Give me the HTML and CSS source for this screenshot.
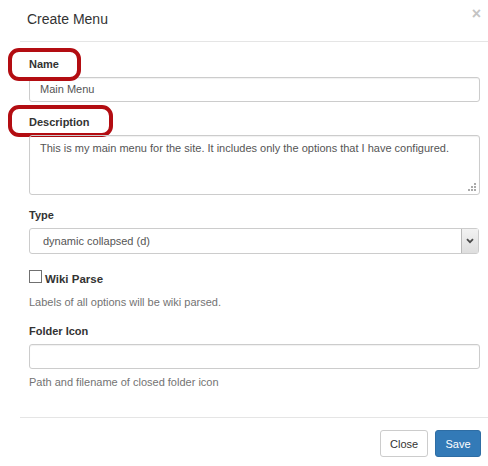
FILE: index.html
```html
<!DOCTYPE html>
<html>
<head>
<meta charset="utf-8">
<link rel="stylesheet" href="styles.css">
</head>
<body>
<div class="modal">
  <div class="header">
    <div class="title">Create Menu</div>
    <div class="close-x">×</div>
  </div>
  <div class="content">
    <div class="group">
      <div class="label-row"><span class="label mark mark-name">Name</span></div>
      <div class="input">Main Menu</div>
    </div>
    <div class="group">
      <div class="label-row"><span class="label mark mark-desc">Description</span></div>
      <div class="textarea">This is my main menu for the site. It includes only the options that I have configured.
        <svg class="grip" width="10" height="10" viewBox="0 0 10 10">
          <rect x="7" y="1" width="2" height="2" fill="#aaa"/>
          <rect x="4" y="4" width="2" height="2" fill="#aaa"/>
          <rect x="7" y="4" width="2" height="2" fill="#aaa"/>
          <rect x="1" y="7" width="2" height="2" fill="#aaa"/>
          <rect x="4" y="7" width="2" height="2" fill="#aaa"/>
          <rect x="7" y="7" width="2" height="2" fill="#aaa"/>
        </svg>
      </div>
    </div>
    <div class="group">
      <div class="label-row"><span class="label">Type</span></div>
      <div class="select">
        <span class="select-text">dynamic collapsed (d)</span>
        <span class="select-btn">
          <svg width="8" height="6" viewBox="0 0 8 6"><path d="M1 1.2 L4 4.2 L7 1.2" fill="none" stroke="#4a4a4a" stroke-width="1.8"/></svg>
        </span>
      </div>
    </div>
    <div class="check-row">
      <span class="checkbox"></span>
      <span class="check-label">Wiki Parse</span>
    </div>
    <div class="help help-wiki">Labels of all options will be wiki parsed.</div>
    <div class="group group-folder">
      <div class="label-row"><span class="label">Folder Icon</span></div>
      <div class="input"></div>
    </div>
    <div class="help help-folder">Path and filename of closed folder icon</div>
  </div>
  <div class="footer">
    <button class="btn btn-default">Close</button>
    <button class="btn btn-primary">Save</button>
  </div>
</div>
</body>
</html>
```

FILE: styles.css
```css
html, body {
  margin: 0;
  padding: 0;
  background: #fff;
}
body {
  font-family: "Liberation Sans", Arial, sans-serif;
  font-size: 11px;
  line-height: 15px;
  color: #333;
}
.modal {
  width: 488px;
  height: 466px;
  background: #fff;
  overflow: hidden;
}
.header {
  margin-left: 20px;
  height: 30px;
  padding: 11px 7px 0 7px;
  border-bottom: 1px solid #e5e5e5;
  display: flex;
  justify-content: space-between;
  align-items: flex-start;
}
.title {
  font-size: 14px;
  line-height: 16px;
  color: #333;
}
.close-x {
  font-size: 16px;
  font-weight: bold;
  line-height: 16px;
  margin-top: -5px;
  color: #c4c4c4;
}
.content {
  padding: 15px 8px 27px 29px;
}
.group {
  margin-bottom: 13px;
}
.label-row {
  height: 15px;
  margin-bottom: 5px;
}
.label {
  font-weight: bold;
  display: inline-block;
  position: relative;
}
.mark::before {
  content: "";
  position: absolute;
  border: 4px solid #b30d12;
  border-radius: 11px;
  box-sizing: border-box;
}
.mark-name::before {
  left: -21px;
  top: -9px;
  width: 73px;
  height: 33px;
}
.mark-desc::before {
  left: -21px;
  top: -10px;
  width: 105px;
  height: 32px;
}
.input {
  box-sizing: border-box;
  height: 25px;
  border: 1px solid #ccc;
  border-radius: 3px;
  padding: 0 10px;
  line-height: 23px;
  color: #555;
  box-shadow: inset 0 1px 1px rgba(0,0,0,0.06);
}
.textarea {
  position: relative;
  box-sizing: border-box;
  height: 60px;
  border: 1px solid #ccc;
  border-radius: 3px;
  padding: 5px 10px;
  color: #555;
  box-shadow: inset 0 1px 1px rgba(0,0,0,0.06);
}
.grip {
  position: absolute;
  right: 2px;
  bottom: 2px;
}
.select {
  box-sizing: border-box;
  height: 26px;
  margin-right: 1px;
  border: 1px solid #ccc;
  border-radius: 3px;
  display: flex;
  align-items: stretch;
  color: #555;
}
.select-text {
  flex: 1;
  padding-left: 13px;
  line-height: 24px;
}
.select-btn {
  width: 16px;
  background: linear-gradient(#f2f2f2, #dedede);
  border-left: 1px solid #b9b9b9;
  display: flex;
  align-items: center;
  justify-content: center;
}
.check-row {
  margin-top: 16px;
  display: flex;
  align-items: baseline;
}
.checkbox {
  width: 13px;
  height: 13px;
  box-sizing: border-box;
  border: 1px solid #707070;
  background: #fff;
  margin-right: 3px;
}
.check-label {
  font-weight: bold;
  font-size: 11.5px;
}
.help {
  color: #737373;
}
.help-wiki {
  margin-top: 8px;
  margin-bottom: 14px;
}
.group-folder {
  margin-bottom: 6px;
}
.footer {
  margin-left: 20px;
  border-top: 1px solid #e5e5e5;
  padding: 12px 7px 0 0;
  display: flex;
  justify-content: flex-end;
  gap: 7px;
}
.btn {
  font-family: "Liberation Sans", Arial, sans-serif;
  font-size: 11px;
  height: 27px;
  padding: 0 9px;
  border-radius: 3px;
  border: 1px solid #ccc;
  background: #fff;
  color: #333;
}
.btn-default {
  width: 48px;
}
.btn-primary {
  width: 46px;
  background: #337ab7;
  border-color: #2e6da4;
  color: #fff;
}
```
